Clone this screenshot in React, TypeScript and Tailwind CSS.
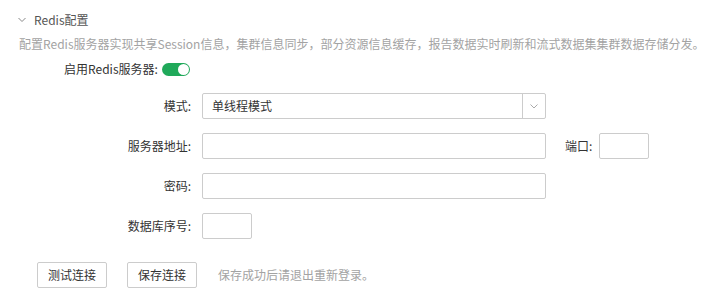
import React from "react";

const font = { fontFamily: '"Noto Sans CJK SC", "Microsoft YaHei", sans-serif' };

function Row({ label, children }: { label: string; children: React.ReactNode }) {
  return (
    <div className="flex items-center h-[26px]">
      <div className="w-[191px] text-right text-[12px] leading-[20px] text-[#333]">{label}</div>
      <div className="ml-[11px] flex items-center">{children}</div>
    </div>
  );
}

export default function App() {
  return (
    <div className="w-[725px] h-[302px] bg-white overflow-hidden" style={font}>
      <div className="flex items-center h-[20px] mt-[10px] pl-[18px]">
        <svg width="8" height="6" viewBox="0 0 8 6" className="mr-[8px]">
          <path d="M0.5 1 L4 4.5 L7.5 1" fill="none" stroke="#888" strokeWidth="1" />
        </svg>
        <span className="text-[12px] leading-[20px] text-[#555]">Redis配置</span>
      </div>
      <div className="mt-[4px] pl-[19px] text-[12px] leading-[20px] text-[#a3a3a3] whitespace-nowrap">
        配置Redis服务器实现共享Session信息，集群信息同步，部分资源信息缓存，报告数据实时刷新和流式数据集集群数据存储分发。
      </div>
      <div className="mt-[5px] pl-[64px] flex items-center h-[20px]">
        <span className="text-[12px] leading-[20px] text-[#333]">启用Redis服务器:</span>
        <div className="ml-[4px] w-[28px] h-[13px] rounded-full bg-[#20a95a] flex items-center justify-end pr-[1px]">
          <div className="w-[11px] h-[11px] rounded-full bg-white" />
        </div>
      </div>
      <div className="mt-[14px] flex flex-col gap-[14px]">
        <Row label="模式:">
          <div className="w-[344px] h-[26px] border border-[#ccc] rounded-[2px] flex items-stretch">
            <div className="flex-1 flex items-center pl-[9px] text-[12px] text-[#333]">单线程模式</div>
            <div className="w-[23px] border-l border-[#ccc] flex items-center justify-center">
              <svg width="8" height="5" viewBox="0 0 8 5">
                <path d="M0.5 0.5 L4 4 L7.5 0.5" fill="none" stroke="#aaa" strokeWidth="1" />
              </svg>
            </div>
          </div>
        </Row>
        <Row label="服务器地址:">
          <div className="w-[344px] h-[26px] border border-[#ccc] rounded-[2px]" />
          <span className="ml-[19px] text-[12px] leading-[20px] text-[#333]">端口:</span>
          <div className="ml-[7px] w-[50px] h-[26px] border border-[#ccc] rounded-[2px]" />
        </Row>
        <Row label="密码:">
          <div className="w-[344px] h-[26px] border border-[#ccc] rounded-[2px]" />
        </Row>
        <Row label="数据库序号:">
          <div className="w-[50px] h-[26px] border border-[#ccc] rounded-[2px]" />
        </Row>
      </div>
      <div className="mt-[23px] pl-[37px] flex items-center">
        <button className="w-[70px] h-[26px] border border-[#ccc] rounded-[2px] text-[12px] text-[#333] bg-white">测试连接</button>
        <button className="ml-[20px] w-[70px] h-[26px] border border-[#ccc] rounded-[2px] text-[12px] text-[#333] bg-white">保存连接</button>
        <span className="ml-[21px] text-[12px] leading-[20px] text-[#a3a3a3]">保存成功后请退出重新登录。</span>
      </div>
    </div>
  );
}
